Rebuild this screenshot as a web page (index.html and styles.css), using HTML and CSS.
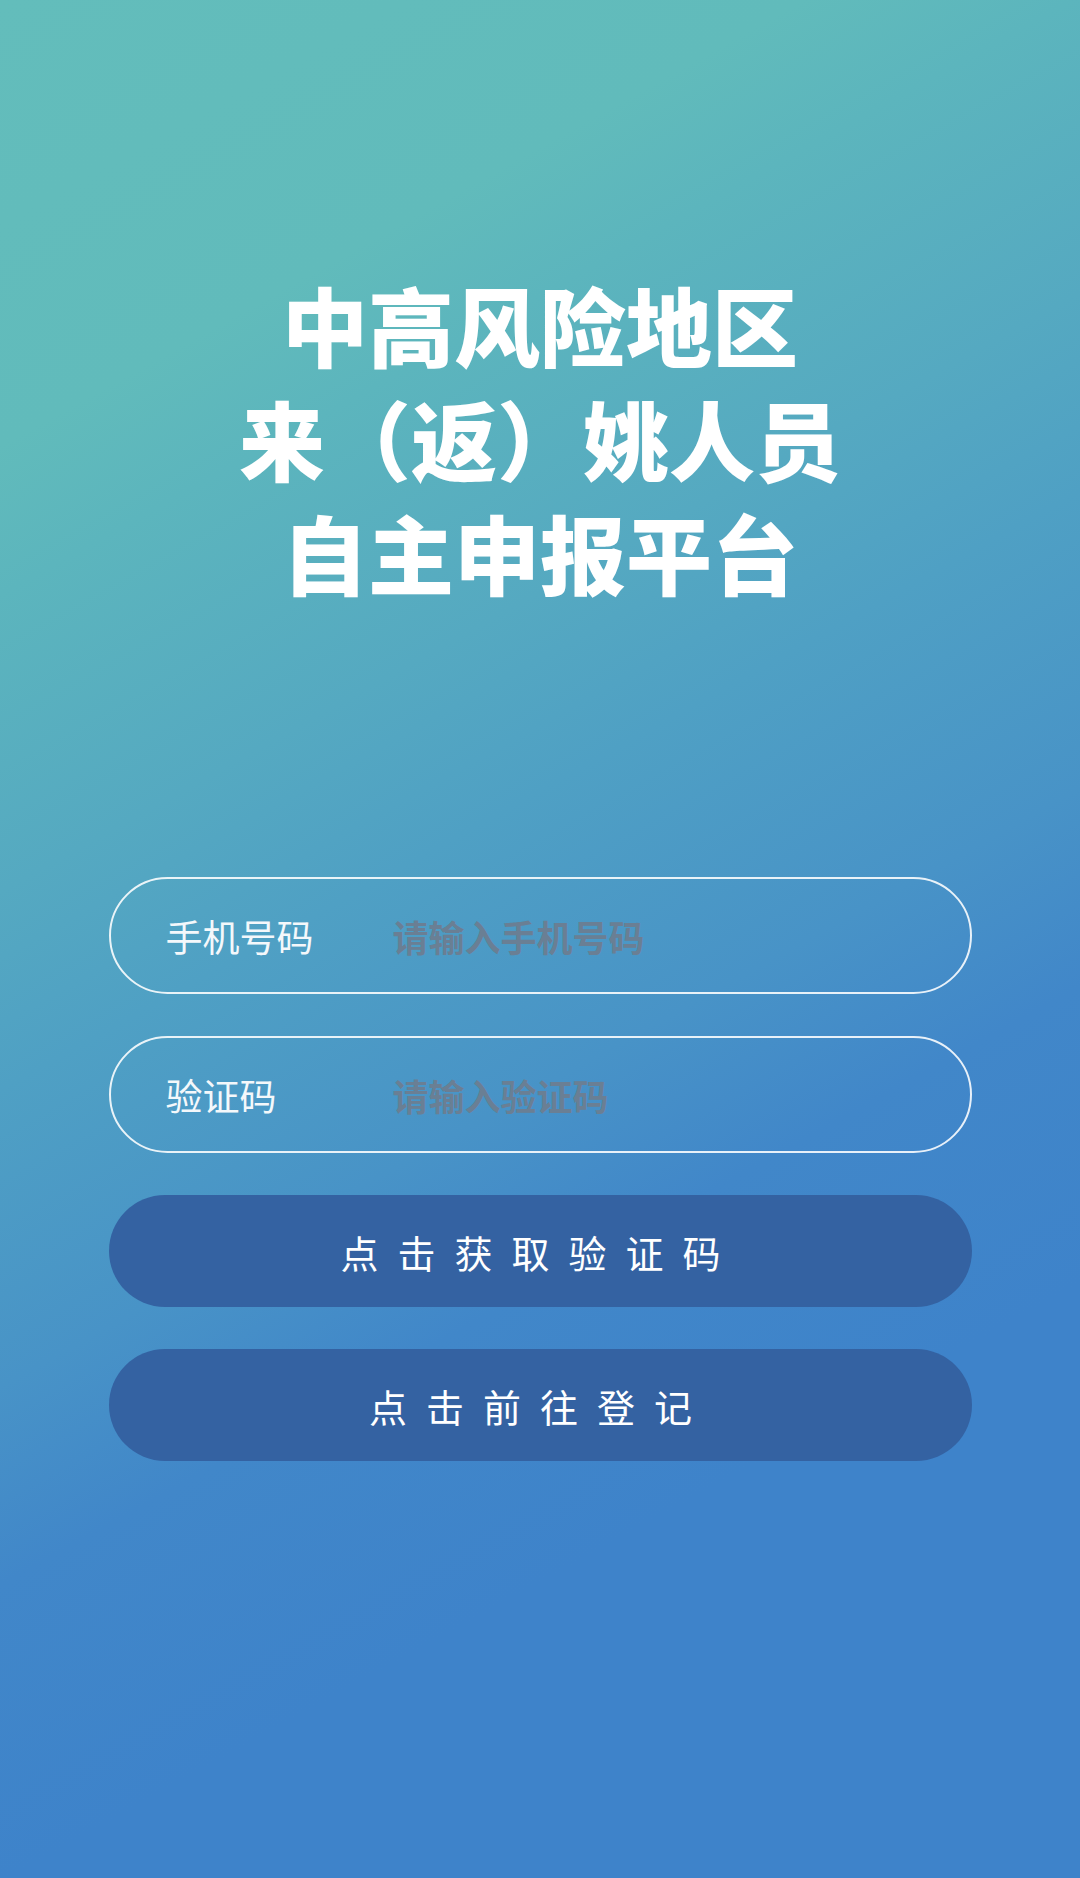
FILE: index.html
```html
<!DOCTYPE html>
<html lang="zh-CN">
<head>
    <meta charset="UTF-8">
    <meta name="viewport" content="width=device-width, initial-scale=1.0">
    <title>中高风险地区来（返）姚人员自主申报平台</title>
    <link rel="stylesheet" href="styles.css">
</head>
<body>
    <div class="page">
        <!-- 标题 -->
        <h1 class="title">
            <span>中高风险地区</span>
            <span>来（返）姚人员</span>
            <span>自主申报平台</span>
        </h1>

        <!-- 表单 -->
        <div class="form">
            <label class="field">
                <span class="field-label">手机号码</span>
                <input type="tel" class="field-input" placeholder="请输入手机号码">
            </label>
            <label class="field">
                <span class="field-label">验证码</span>
                <input type="text" class="field-input" placeholder="请输入验证码">
            </label>
            <button class="btn">点击获取验证码</button>
            <button class="btn">点击前往登记</button>
        </div>
    </div>
</body>
</html>
```

FILE: styles.css
```css
html, body {
    margin: 0;
    padding: 0;
}
body {
    font-family: "Noto Sans CJK SC", "Noto Sans", sans-serif;
    width: 1080px;
    height: 1878px;
    overflow: hidden;
    background: linear-gradient(151deg, #63bdbb 0%, #61bbbb 18%, #5cb5bd 24%, #55a9c1 36%, #4fa0c4 44%, #4893c7 56%, #4187c9 64%, #3e83ca 76%, #3e83ca 100%);
}
.page {
    display: flex;
    flex-direction: column;
    align-items: center;
}
.title {
    margin: 267px 0 0;
    display: flex;
    flex-direction: column;
    align-items: center;
    color: #ffffff;
    font-size: 86px;
    font-weight: 900;
    line-height: 114px;
}
.form {
    margin-top: 268px;
    width: 863px;
    display: flex;
    flex-direction: column;
    gap: 42px;
}
.field {
    box-sizing: border-box;
    height: 117px;
    border: 2px solid rgba(255, 255, 255, 0.88);
    border-radius: 60px;
    display: flex;
    align-items: center;
    padding-left: 55px;
}
.field-label {
    width: 227px;
    flex-shrink: 0;
    color: #f4f8fb;
    font-size: 37px;
}
.field-input {
    flex: 1;
    min-width: 0;
    border: none;
    outline: none;
    background: transparent;
    font-family: inherit;
    font-size: 36px;
    font-weight: 700;
    color: #ffffff;
    padding: 0;
}
.field-input::placeholder {
    color: #6a7f94;
}
.btn {
    height: 112px;
    border: none;
    border-radius: 56px;
    background-color: #3462a2;
    color: #ffffff;
    font-family: inherit;
    font-size: 38px;
    letter-spacing: 19px;
    padding: 0;
    cursor: pointer;
}
```
